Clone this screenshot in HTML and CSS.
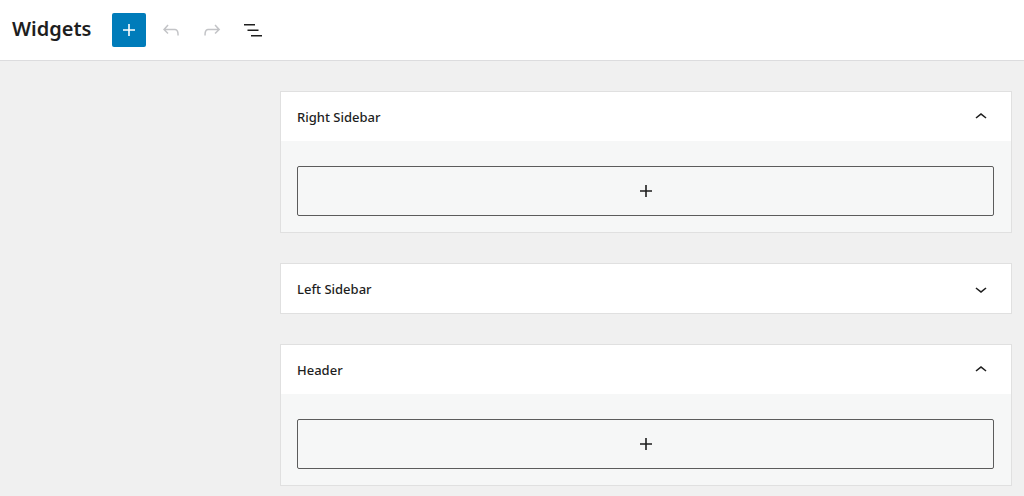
FILE: index.html
```html
<!DOCTYPE html>
<html lang="en">
<head>
<meta charset="utf-8">
<title>Widgets</title>
<link rel="stylesheet" href="styles.css">
</head>
<body>
<header class="topbar">
  <h1 class="title">Widgets</h1>
  <div class="toolbar">
    <button class="btn-add" aria-label="Add block">
      <svg viewBox="0 0 24 24" width="24" height="24"><path d="M18 11.2h-5.2V6h-1.6v5.2H6v1.6h5.2V18h1.6v-5.2H18z"/></svg>
    </button>
    <button class="btn-icon disabled" aria-label="Undo">
      <svg viewBox="0 0 24 24" width="24" height="24"><path d="M18.3 11.7c-.6-.6-1.4-.9-2.3-.9H6.7l2.9-3.3-1.1-1-4.5 5L8.5 16l1-1-2.7-2.7H16c.5 0 .9.2 1.3.5 1 1 1 3.4 1 4.5v.3h1.5v-.2c0-1.5 0-4.3-1.5-5.7z"/></svg>
    </button>
    <button class="btn-icon disabled" aria-label="Redo">
      <svg viewBox="0 0 24 24" width="24" height="24"><path d="M15.6 6.5l-1.1 1 2.9 3.3H8c-.9 0-1.7.3-2.3.9-1.4 1.5-1.4 4.2-1.4 5.6v.2h1.5v-.3c0-1.1 0-3.5 1-4.5.3-.3.7-.5 1.3-.5h9.2L14.5 15l1.1 1.1 4.6-4.6-4.6-5z"/></svg>
    </button>
    <button class="btn-icon" aria-label="List view">
      <svg viewBox="0 0 24 24" width="24" height="24"><path d="M3 6h11v1.5H3V6Zm3.5 5.5h11V13h-11v-1.5ZM21 17H10v1.5h11V17Z"/></svg>
    </button>
  </div>
</header>
<main class="content">
  <section class="panel open">
    <div class="panel-head">
      <span class="panel-title">Right Sidebar</span>
      <svg class="chev" viewBox="0 0 24 24" width="24" height="24"><path d="M6.5 12.4L12 8l5.5 4.4-.9 1.2L12 10l-4.5 3.6-1-1.2z"/></svg>
    </div>
    <div class="panel-body">
      <button class="appender" aria-label="Add block">
        <svg viewBox="0 0 24 24" width="24" height="24"><path d="M18 11.2h-5.2V6h-1.6v5.2H6v1.6h5.2V18h1.6v-5.2H18z"/></svg>
      </button>
    </div>
  </section>
  <section class="panel">
    <div class="panel-head">
      <span class="panel-title">Left Sidebar</span>
      <svg class="chev" viewBox="0 0 24 24" width="24" height="24"><path d="M17.5 11.6L12 16l-5.5-4.4.9-1.2L12 14l4.5-3.6 1 1.2z"/></svg>
    </div>
  </section>
  <section class="panel open">
    <div class="panel-head">
      <span class="panel-title">Header</span>
      <svg class="chev" viewBox="0 0 24 24" width="24" height="24"><path d="M6.5 12.4L12 8l5.5 4.4-.9 1.2L12 10l-4.5 3.6-1-1.2z"/></svg>
    </div>
    <div class="panel-body">
      <button class="appender" aria-label="Add block">
        <svg viewBox="0 0 24 24" width="24" height="24"><path d="M18 11.2h-5.2V6h-1.6v5.2H6v1.6h5.2V18h1.6v-5.2H18z"/></svg>
      </button>
    </div>
  </section>
</main>
</body>
</html>
```
FILE: styles.css
```css
* { box-sizing: border-box; }
html, body { margin: 0; padding: 0; }
body {
  background: #f0f0f0;
  font-family: "Noto Sans", "Open Sans", sans-serif;
  color: #1e1e1e;
  height: 496px;
  overflow: hidden;
}
.topbar {
  height: 61px;
  background: #fff;
  border-bottom: 1px solid #dcdcde;
  display: flex;
  align-items: center;
  padding-left: 12px;
}
.title {
  margin: 0;
  font-size: 20px;
  font-weight: 560;
  line-height: 1;
  color: #1e1e1e;
  width: 99.5px;
  padding-bottom: 2px;
}
.toolbar {
  display: flex;
  align-items: center;
  gap: 5px;
}
button {
  border: 0;
  padding: 0;
  background: none;
  font: inherit;
  cursor: pointer;
  display: flex;
  align-items: center;
  justify-content: center;
}
.btn-add {
  width: 34px;
  height: 34px;
  background: #007cba;
  border-radius: 2px;
  fill: #fff;
  margin-right: 2px;
}
.btn-icon {
  width: 36px;
  height: 36px;
  fill: #1e1e1e;
}
.btn-icon.disabled { fill: #c3c4c7; }
.content {
  padding: 30px 12px 0 280px;
  display: flex;
  flex-direction: column;
  gap: 30px;
}
.panel {
  background: #fff;
  border: 1px solid #e0e0e0;
}
.panel-head {
  height: 49px;
  display: flex;
  align-items: center;
  justify-content: space-between;
  padding: 0 18px 0 16px;
}
.panel-title {
  font-size: 13px;
  font-weight: 500;
  color: #1e1e1e;
}
.chev { fill: #1e1e1e; }
.panel-body {
  background: #f6f7f7;
  padding: 25px 17px 16px 16px;
}
.appender {
  width: 100%;
  height: 50px;
  border: 1.5px solid #5c5c5c;
  border-radius: 2px;
  background: #f6f7f7;
  fill: #1e1e1e;
}
```
